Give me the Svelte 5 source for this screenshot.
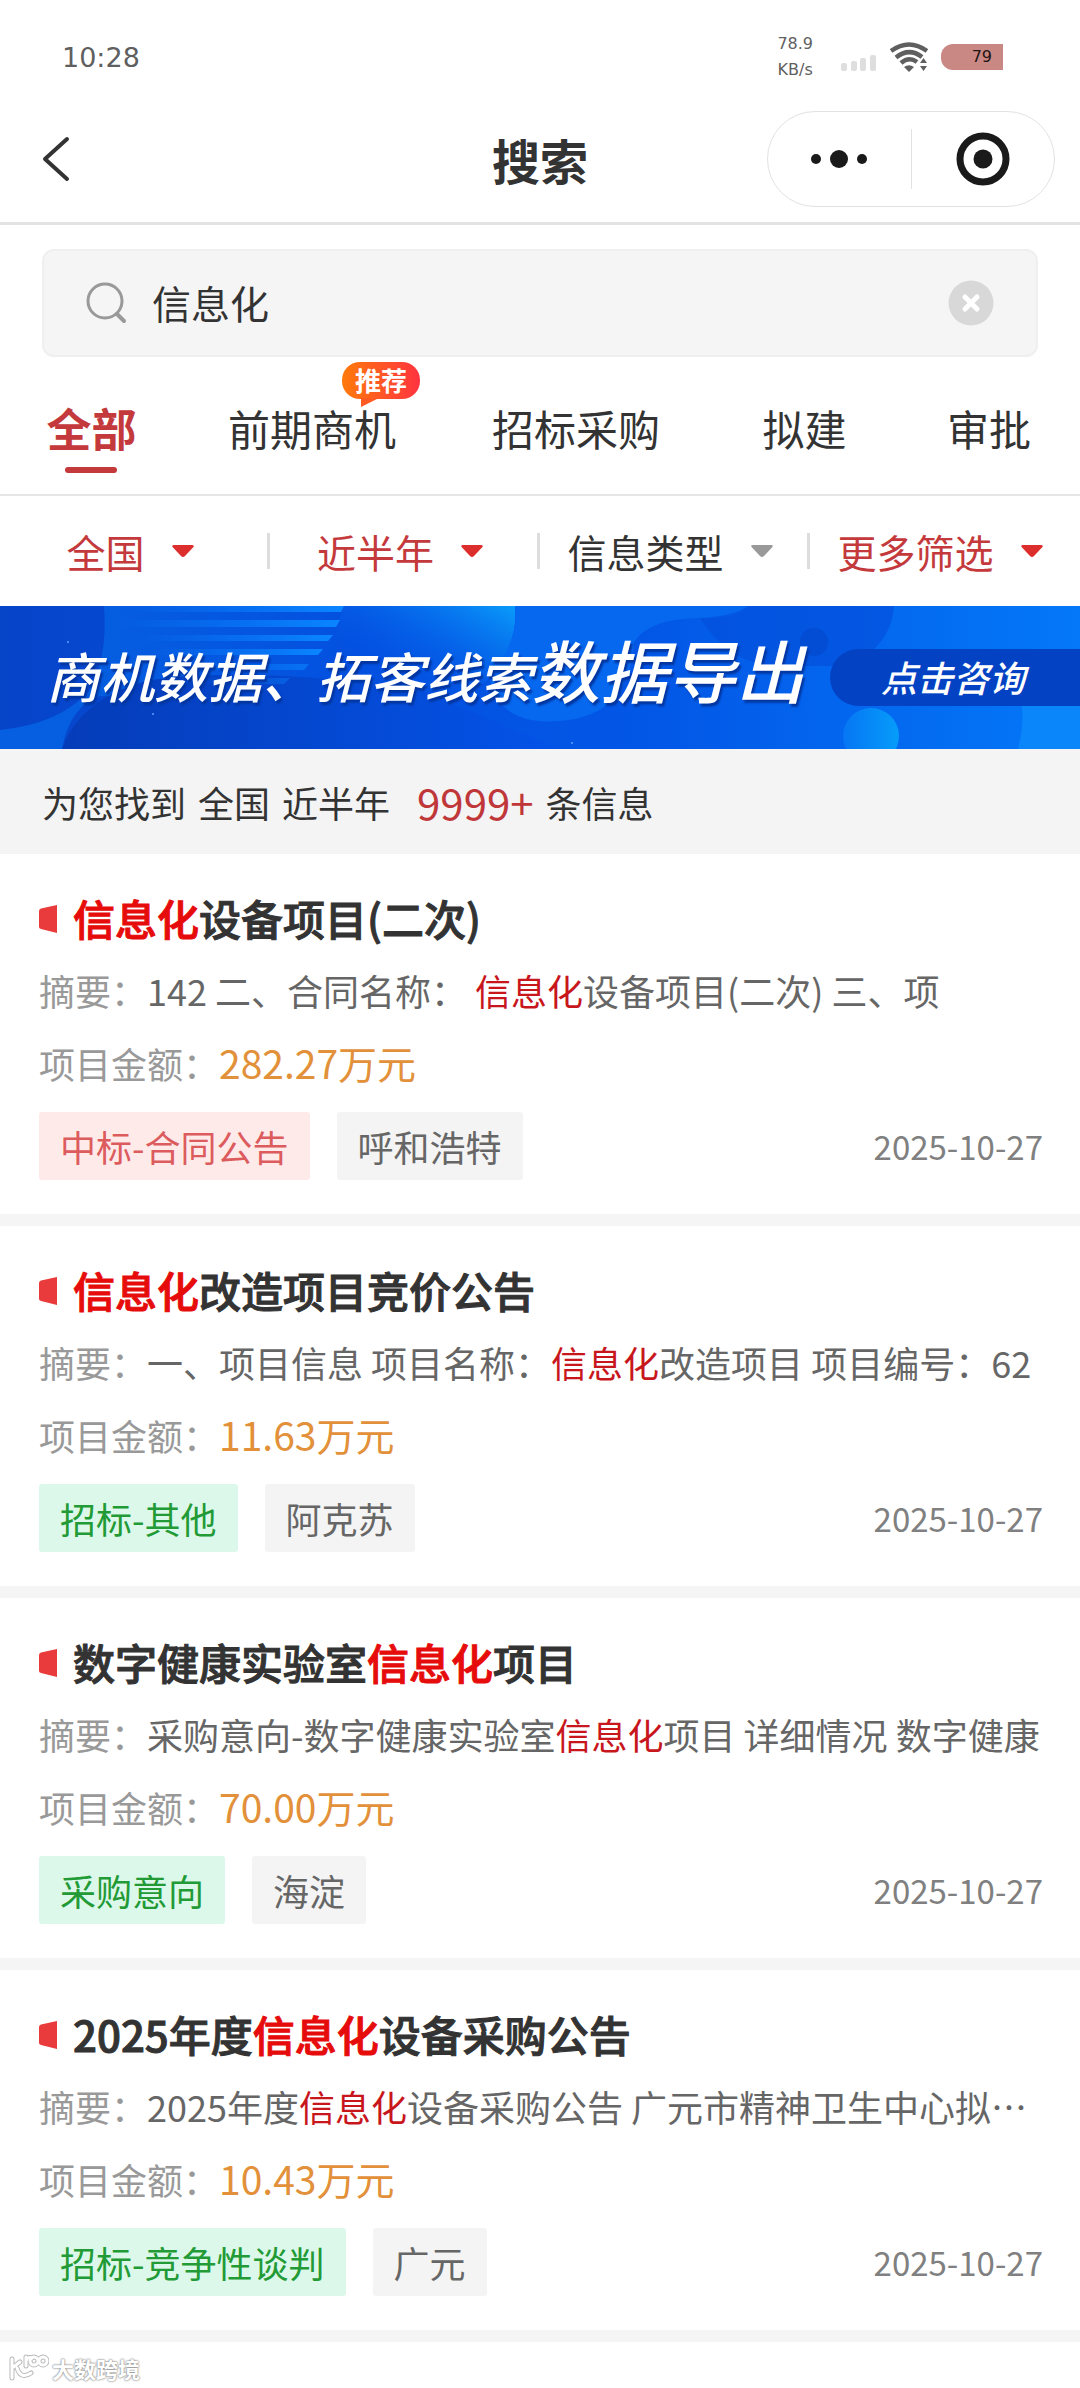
<script>
    let keyword = $state('信息化')
    let activeTab = $state('全部')

    const tabs = [
        { name: '全部' },
        { name: '前期商机', badge: '推荐' },
        { name: '招标采购' },
        { name: '拟建' },
        { name: '审批' }
    ]

    const filters = [
        { name: '全国', active: true },
        { name: '近半年', active: true },
        { name: '信息类型', active: false },
        { name: '更多筛选', active: true }
    ]

    const results = [
        {
            title: '信息化设备项目(二次)',
            summary: '142 二、合同名称： 信息化设备项目(二次) 三、项',
            amount: '282.27万元',
            type: '中标-合同公告',
            tone: 'red',
            area: '呼和浩特',
            date: '2025-10-27'
        },
        {
            title: '信息化改造项目竞价公告',
            summary: '一、项目信息 项目名称：信息化改造项目 项目编号：62',
            amount: '11.63万元',
            type: '招标-其他',
            tone: 'green',
            area: '阿克苏',
            date: '2025-10-27'
        },
        {
            title: '数字健康实验室信息化项目',
            summary: '采购意向-数字健康实验室信息化项目 详细情况 数字健康',
            amount: '70.00万元',
            type: '采购意向',
            tone: 'green',
            area: '海淀',
            date: '2025-10-27'
        },
        {
            title: '2025年度信息化设备采购公告',
            summary: '2025年度信息化设备采购公告 广元市精神卫生中心拟…',
            amount: '10.43万元',
            type: '招标-竞争性谈判',
            tone: 'green',
            area: '广元',
            date: '2025-10-27'
        }
    ]

    // split on the keyword, keeping the matches as their own parts
    function highlight(text) {
        return text.split(/(信息化)/).filter(Boolean)
    }
</script>

{#snippet marked(text)}
    {#each highlight(text) as part}{#if part === '信息化'}<em>{part}</em>{:else}{part}{/if}{/each}
{/snippet}

<div class="page">
    <div class="status">
        <span class="time">10:28</span>
        <div class="speed"><span>78.9</span><span>KB/s</span></div>
        <svg class="signal" width="36" height="18" viewBox="0 0 36 18" fill="#dedede">
            <rect x="0" y="9" width="6" height="8" rx="2" />
            <rect x="10" y="7" width="6" height="10" rx="2" />
            <rect x="19" y="4" width="6" height="13" rx="2" />
            <rect x="29" y="1" width="6" height="16" rx="2" />
        </svg>
        <svg class="wifi" width="38" height="30" viewBox="0 0 38 30" fill="none" stroke="#5f5f5f" stroke-width="4.500">
            <path d="M1 9 Q19 -4 37 9" />
            <path d="M6 15.500 Q19 5 32 15" />
            <path d="M11 21 Q19 14 27 20" />
            <path d="M14 25 Q19 21.500 24 25 L19 30 Z" fill="#5f5f5f" stroke="none" />
            <path d="M30 21 L33.500 16 L37 21 Z M30 24 L37 24 L33.500 29 Z" fill="#5f5f5f" stroke="none" />
        </svg>
        <span class="battery">79</span>
    </div>

    <header>
        <button class="back" aria-label="返回">
            <svg width="28" height="46" viewBox="0 0 28 46" fill="none" stroke="#333" stroke-width="4" stroke-linecap="round" stroke-linejoin="round">
                <path d="M25 3 L3 23 L25 43" />
            </svg>
        </button>
        <h1>搜索</h1>
        <div class="capsule">
            <button aria-label="更多">
                <svg width="60" height="20" viewBox="0 0 60 20" fill="#1a1a1a">
                    <circle cx="7" cy="10" r="5" />
                    <circle cx="30" cy="10" r="9" />
                    <circle cx="53" cy="10" r="5" />
                </svg>
            </button>
            <button aria-label="关闭">
                <svg width="54" height="54" viewBox="0 0 54 54">
                    <circle cx="27" cy="27" r="23" fill="none" stroke="#1a1a1a" stroke-width="7" />
                    <circle cx="27" cy="27" r="9.500" fill="#1a1a1a" />
                </svg>
            </button>
        </div>
    </header>

    <div class="search">
        <svg width="42" height="42" viewBox="0 0 42 42" fill="none" stroke="#999" stroke-width="3" stroke-linecap="round">
            <circle cx="19" cy="19" r="17" />
            <path d="M31 32 L38 39" stroke-width="4" />
        </svg>
        <input type="text" aria-label="搜索关键词" bind:value={keyword}>
        <button aria-label="清除" onclick={() => keyword = ''}>
            <svg width="46" height="46" viewBox="0 0 46 46">
                <circle cx="23" cy="23" r="22.500" fill="#d8d8d8" />
                <path d="M17 17 L29 29 M29 17 L17 29" stroke="#fff" stroke-width="5" stroke-linecap="round" />
            </svg>
        </button>
    </div>

    <nav class="tabs">
        {#each tabs as tab}
            <button class:active={activeTab === tab.name} onclick={() => activeTab = tab.name}>
                <span class="tab-name">
                    {tab.name}
                    {#if tab.badge}<span class="badge">{tab.badge}</span>{/if}
                </span>
            </button>
        {/each}
    </nav>

    <div class="filters">
        {#each filters as filter}
            <button class:active={filter.active}>
                {filter.name}
                <svg width="24" height="14" viewBox="0 0 24 14" fill="currentColor">
                    <path d="M3 1 H21 Q24 1 22 3.500 L14 12 Q12 14 10 12 L2 3.500 Q0 1 3 1 Z" />
                </svg>
            </button>
        {/each}
    </div>

    <a class="banner" href="#export">
        <svg class="banner-bg" viewBox="0 0 1080 143" preserveAspectRatio="none">
            <defs>
                <linearGradient id="base" x1="0" x2="1" y1="0" y2="0">
                    <stop offset="0" stop-color="#0644c8" />
                    <stop offset="0.3" stop-color="#0450e0" />
                    <stop offset="0.6" stop-color="#0357e6" />
                    <stop offset="1" stop-color="#0478f8" />
                </linearGradient>
                <linearGradient id="orb" x1="0" x2="1" y1="1" y2="0">
                    <stop offset="0.3" stop-color="#0456e8" stop-opacity="0" />
                    <stop offset="1" stop-color="#0a9cfa" />
                </linearGradient>
                <linearGradient id="stripe" x1="0" x2="1" y1="0" y2="0">
                    <stop offset="0" stop-color="#0a80ff" stop-opacity="0" />
                    <stop offset="1" stop-color="#0a86ff" />
                </linearGradient>
                <linearGradient id="low" x1="0" x2="1" y1="0" y2="0">
                    <stop offset="0" stop-color="#053cb8" />
                    <stop offset="1" stop-color="#0453e8" />
                </linearGradient>
                <linearGradient id="left" x1="0" x2="1" y1="0" y2="0">
                    <stop offset="0.2" stop-color="#055fe0" />
                    <stop offset="1" stop-color="#0450e0" />
                </linearGradient>
                <linearGradient id="ball" x1="0" x2="1" y1="0" y2="0">
                    <stop offset="0" stop-color="#0676f4" />
                    <stop offset="1" stop-color="#069cfa" />
                </linearGradient>
            </defs>
            <rect width="1080" height="143" fill="url(#base)" />
            <path d="M104 0 H360 V90 H100 Q70 100 62 143 H0 V124 Q60 118 90 84 Q108 50 104 0 Z" fill="url(#left)" />
            <path d="M62 143 Q80 92 150 74 Q260 60 420 84 L560 143 Z" fill="url(#low)" />
            <g fill="url(#stripe)">
                <path d="M130 0 H344 L341 6 H130 Z" />
                <path d="M120 14 H340 L336 21 H120 Z" />
                <path d="M140 29 H333 L328 35 H140 Z" />
                <path d="M150 43 H323 L318 49 H150 Z" />
                <path d="M170 58 H309 L304 64 H170 Z" opacity="0.6" />
                <path d="M190 72 H290 L284 78 H190 Z" opacity="0.4" />
            </g>
            <path d="M344 0 H515 Q518 36 496 66 Q460 104 400 100 Q310 90 344 0 Z" fill="url(#orb)" />
            <path d="M515 0 H748 Q740 14 700 12 Q650 12 634 36 Q630 110 560 115 Q500 120 490 74 Q520 30 515 0 Z" fill="#0668ee" />
            <path d="M748 0 H894 Q892 38 850 60 H780 Q730 60 700 12 Q735 10 748 0 Z" fill="#0450dc" opacity="0.7" />
            <circle cx="814" cy="36" r="14" fill="#0348cc" opacity="0.6" />
            <circle cx="871" cy="130" r="28" fill="url(#ball)" />
            <path d="M1022 100 H1080 V143 H1018 Q1024 120 1022 100 Z" fill="#0a86fa" />
            <g fill="#5aa2ff">
                <circle cx="68" cy="36" r="1" />
                <circle cx="153" cy="108" r="1" />
                <circle cx="572" cy="137" r="1" />
            </g>
        </svg>
        <span class="slogan">商机数据、拓客线索<strong>数据导出</strong></span>
        <span class="consult">点击咨询</span>
    </a>

    <p class="count">
        <span>为您找到</span>
        <span>全国</span>
        <span>近半年</span>
        <span class="total">9999+</span>
        <span>条信息</span>
    </p>

    <main>
        {#each results as item}
            <article>
                <h2>
                    <svg width="18" height="30" viewBox="0 0 18 30">
                        <path d="M0 8 Q0 6 2 5.500 L18 2 V30 L2 26 Q0 25.500 0 24 Z" fill="#e93b3b" />
                    </svg>
                    <span>{@render marked(item.title)}</span>
                </h2>
                <p class="summary"><span class="label">摘要：</span>{@render marked(item.summary)}</p>
                <p class="amount"><span class="label">项目金额：</span><b>{item.amount}</b></p>
                <div class="meta">
                    <span class="tag {item.tone}">{item.type}</span>
                    <span class="tag">{item.area}</span>
                    <time>{item.date}</time>
                </div>
            </article>
        {/each}
    </main>

    <div class="watermark">
        <svg width="40" height="28" viewBox="0 0 40 28" fill="none" stroke-linecap="round">
            <g stroke="#bbb" stroke-width="5">
                <path d="M3 5 V24 M3 14 L11 8 M8 14 Q12 26 22 19 M17 12 V3 M17 7 Q19 2 23 4" />
                <circle cx="25" cy="7" r="4" />
                <circle cx="34" cy="7" r="4" />
            </g>
            <g stroke="#fff" stroke-width="3">
                <path d="M3 5 V24 M3 14 L11 8 M8 14 Q12 26 22 19 M17 12 V3 M17 7 Q19 2 23 4" />
                <circle cx="25" cy="7" r="4" />
                <circle cx="34" cy="7" r="4" />
            </g>
        </svg>
        大数跨境
    </div>
</div>

<style>
    :global(body) {
        margin: 0;
        background: #fff;
    }

    .page {
        position: relative;
        display: flex;
        flex-direction: column;
        height: 100vh;
        overflow: hidden;
        background: #fff;
        color: #333;
        font-family: "Noto Sans CJK SC", sans-serif;
        font-size: 36px;
    }

    .page > * {
        flex-shrink: 0;
    }

    button {
        border: none;
        padding: 0;
        background: none;
        color: inherit;
        font: inherit;
        cursor: pointer;
    }

    svg {
        display: block;
        flex-shrink: 0;
    }

    p, h1, h2 {
        margin: 0;
    }

    em, b {
        font-style: normal;
        font-weight: inherit;
    }

    em {
        color: #c8161d;
    }

    .status {
        display: flex;
        align-items: center;
        height: 96px;
        padding: 18px 77px 0 62px;
        box-sizing: border-box;
        color: #5f5f5f;
        font-family: "DejaVu Sans", sans-serif;
    }

    .time {
        flex: 1;
        font-size: 27px;
    }

    .speed {
        display: flex;
        flex-direction: column;
        align-items: center;
        margin-right: 28px;
        font-size: 16px;
        line-height: 26px;
    }

    .signal {
        margin: 12px 13px 0 0;
    }

    .wifi {
        margin-right: 13px;
    }

    .battery {
        width: 62px;
        height: 26px;
        padding-right: 11px;
        box-sizing: border-box;
        border-radius: 12px 0 0 12px;
        background: #c98883;
        color: #221414;
        font-size: 16px;
        line-height: 26px;
        text-align: right;
    }

    header {
        display: grid;
        grid-template-columns: 1fr auto 1fr;
        align-items: center;
        height: 129px;
        padding: 0 25px;
        box-sizing: border-box;
        border-bottom: 3px solid #e3e3e3;
    }

    .back {
        justify-self: start;
        margin-left: 17px;
    }

    h1 {
        font-size: 48px;
        line-height: 64px;
        font-weight: 700;
    }

    .capsule {
        justify-self: end;
        display: flex;
        align-items: center;
        width: 288px;
        height: 96px;
        box-sizing: border-box;
        border: 1px solid #e2e2e2;
        border-radius: 48px;
    }

    .capsule button {
        flex: 1;
        display: flex;
        align-items: center;
        justify-content: center;
        height: 60px;
    }

    .capsule button + button {
        border-left: 1px solid #e2e2e2;
    }

    .search {
        display: flex;
        align-items: center;
        height: 108px;
        margin: 24px 42px 0;
        padding: 0 42px;
        box-sizing: border-box;
        border: 2px solid #efefef;
        border-radius: 12px;
        background: #f5f5f5;
    }

    .search input {
        flex: 1;
        min-width: 0;
        margin: 0 24px;
        padding: 0 0 2px;
        border: none;
        outline: none;
        background: none;
        color: #333;
        font-family: inherit;
        font-size: 39px;
        line-height: 56px;
    }

    .tabs {
        display: grid;
        grid-template-columns: 183fr 258fr 270fr 187fr 182fr;
        height: 139px;
        box-sizing: border-box;
        padding-top: 34px;
        border-bottom: 2px solid #e6e6e6;
    }

    .tabs button {
        display: flex;
        justify-content: center;
        font-size: 42px;
        line-height: 74px;
    }

    .tab-name {
        position: relative;
        white-space: nowrap;
    }

    .tabs .active {
        color: #c43a3c;
        font-size: 45px;
        font-weight: 700;
    }

    .tabs .active .tab-name::after {
        content: '';
        display: block;
        width: 52px;
        height: 6px;
        margin: 2px auto 0;
        border-radius: 3px;
        background: #c43a3c;
    }

    .badge {
        position: absolute;
        top: -29px;
        right: -24px;
        width: 78px;
        height: 37px;
        border-radius: 18px;
        background: linear-gradient(90deg, #ff7a0a, #ff3340);
        color: #fff;
        font-size: 26px;
        font-weight: 700;
        line-height: 36px;
        text-align: center;
    }

    .badge::after {
        content: '';
        position: absolute;
        top: 36px;
        left: 19px;
        border-top: 9px solid #ff5a22;
        border-right: 18px solid transparent;
    }

    .filters {
        display: grid;
        grid-template-columns: repeat(4, 1fr);
        align-items: center;
        height: 110px;
    }

    .filters button {
        display: flex;
        align-items: center;
        justify-content: center;
        gap: 26px;
        height: 36px;
        padding-right: 6px;
        border-right: 3px solid #ddd;
        font-size: 39px;
        line-height: 36px;
        white-space: nowrap;
    }

    .filters button:last-child {
        border-color: transparent;
    }

    .filters button.active {
        color: #c43a3c;
    }

    .filters svg {
        color: #999;
    }

    .filters .active svg {
        color: #dd2e2e;
    }

    .banner {
        position: relative;
        display: flex;
        align-items: center;
        justify-content: space-between;
        height: 143px;
        padding-left: 46px;
        color: #fff;
        font-style: italic;
        font-weight: 500;
        text-decoration: none;
        white-space: nowrap;
    }

    .banner-bg {
        position: absolute;
        inset: 0;
        width: 100%;
        height: 100%;
    }

    .slogan {
        position: relative;
        padding-bottom: 12px;
        font-size: 54px;
        line-height: 100px;
        text-shadow: 2px 3px 2px #0336a0;
    }

    .slogan strong {
        font-size: 68px;
        font-weight: 500;
    }

    .consult {
        position: relative;
        width: 250px;
        padding: 0 0 2px 51px;
        box-sizing: border-box;
        border-radius: 29px 0 0 29px;
        background: #0442c4;
        font-size: 36px;
        line-height: 55px;
    }

    .count {
        display: flex;
        align-items: center;
        gap: 12px;
        height: 105px;
        padding: 0 42px;
        background: #f4f4f4;
    }

    .total {
        margin-left: 15px;
        color: #c0373a;
        font-size: 42px;
    }

    main {
        display: flex;
        flex-direction: column;
    }

    article {
        padding: 34px 37px 34px 39px;
        border-bottom: 12px solid #f5f5f5;
    }

    h2 {
        display: flex;
        align-items: center;
        gap: 16px;
        margin-bottom: 6px;
        font-size: 42px;
        font-weight: 500;
        line-height: 60px;
        -webkit-text-stroke: 1px currentColor;
    }

    h2 em {
        color: #e60c0c;
    }

    .summary, .amount {
        height: 72px;
        overflow: hidden;
        color: #666;
        line-height: 72px;
        white-space: nowrap;
    }

    .label {
        color: #999;
    }

    .amount b {
        color: #e2913a;
        font-size: 39px;
    }

    .meta {
        display: flex;
        align-items: center;
        gap: 27px;
        margin-top: 14px;
    }

    .tag {
        padding: 0 21px;
        border-radius: 3px;
        background: #f4f4f4;
        color: #666;
        line-height: 68px;
    }

    .tag.red {
        background: #ffeaea;
        color: #dc5c5e;
    }

    .tag.green {
        background: #dcf8ea;
        color: #229a35;
    }

    time {
        margin-left: auto;
        color: #808080;
        font-size: 33px;
    }

    .watermark {
        position: absolute;
        left: 9px;
        bottom: 4px;
        display: flex;
        align-items: center;
        gap: 3px;
        color: #fff;
        font-size: 22px;
        font-weight: 700;
        line-height: 32px;
        text-shadow: 0 0 2px #888, 0 0 2px #888;
    }
</style>
